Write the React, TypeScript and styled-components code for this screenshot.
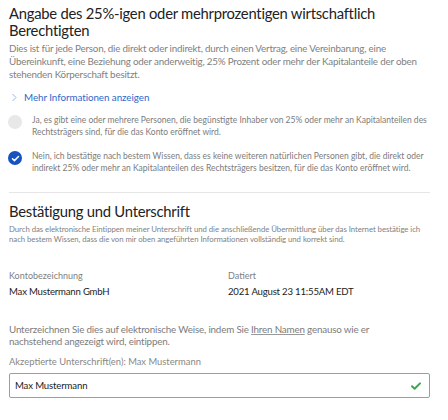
import React from 'react'
import styled, { createGlobalStyle } from 'styled-components'

const GlobalStyle = createGlobalStyle`
  body {
    margin: 0;
    background: #fff;
    font-family: Lato, "Open Sans", sans-serif;
    color: #222;
  }
`

const Page = styled.div`
  width: 448px;
  box-sizing: border-box;
  padding: 5px 18px 0 9px;
`

const Title = styled.h1`
  margin: 0;
  font-size: 14.8px;
  letter-spacing: -0.25px;
  line-height: 17px;
  font-weight: 400;
  color: #222;
`

const Lead = styled.p<{ small?: boolean }>`
  margin: ${p => (p.small ? '4.5px 0 0' : '2.5px 0 0')};
  font-size: ${p => (p.small ? '7.8px' : '9.8px')};
  letter-spacing: ${p => (p.small ? '-0.05px' : '-0.2px')};
  line-height: ${p => (p.small ? '10px' : '13px')};
  white-space: nowrap;
  color: #818181;
`

const MoreLink = styled.a`
  display: flex;
  align-items: center;
  gap: 6px;
  margin-top: 10px;
  height: 13px;
  font-size: 9.8px;
  letter-spacing: -0.05px;
  color: #2a6acb;
  text-decoration: none;
  cursor: pointer;

  svg {
    margin-left: 2px;
  }
`

const Options = styled.div`
  display: flex;
  flex-direction: column;
  gap: 11px;
  margin-top: 10px;
`

const Option = styled.label`
  display: flex;
  align-items: flex-start;
  gap: 10px;
`

const Radio = styled.span<{ checked?: boolean }>`
  flex: none;
  width: 14px;
  height: 14px;
  margin: 1.5px 0 0 -1px;
  border-radius: 50%;
  background: ${p => (p.checked ? '#1652c0' : '#e8e8e8')};
  display: flex;
  align-items: center;
  justify-content: center;
`

const OptionText = styled.span`
  font-size: 8.5px;
  line-height: 12.5px;
  color: #7c7c7c;
`

const Divider = styled.hr`
  border: 0;
  border-top: 1px solid #e6e6e6;
  margin: 17px 0 10px;
`

const Fields = styled.div`
  display: grid;
  grid-template-columns: 219px 1fr;
  margin-top: 25.5px;
`

const Field = styled.div`
  display: flex;
  flex-direction: column;
  gap: 5.5px;
`

const FieldLabel = styled.span`
  font-size: 9px;
  line-height: 11px;
  color: #808080;
`

const FieldValue = styled.span`
  font-size: 9.6px;
  letter-spacing: -0.2px;
  line-height: 12px;
  color: #222;
`

const SignNote = styled.p`
  margin: 26px 0 0;
  font-size: 9.8px;
  letter-spacing: -0.17px;
  line-height: 11.5px;
  color: #7c7c7c;

  u {
    text-decoration-color: #999;
  }
`

const Accepted = styled.div`
  margin-top: 9px;
  font-size: 9.4px;
  line-height: 11px;
  color: #888;
`

const InputBox = styled.div`
  margin-top: 6px;
  height: 25px;
  box-sizing: border-box;
  border: 1px solid #62c474;
  border-radius: 2px;
  display: flex;
  align-items: center;
  justify-content: space-between;
  padding: 0 7px 0 5px;
`

const InputText = styled.span`
  font-size: 9.6px;
  letter-spacing: -0.15px;
  color: #222;
`

const Chevron = () => (
  <svg width="7" height="9" viewBox="0 0 7 9">
    <path d="M1.5 1l3.5 3.5L1.5 8" fill="none" stroke="#9ab6e4" strokeWidth="1" />
  </svg>
)

const Tick = ({ color, size }: { color: string; size: number }) => (
  <svg width={size} height={size} viewBox="0 0 12 12">
    <path d="M2 6.3l2.6 2.5L10 3.4" fill="none" stroke={color} strokeWidth="2" strokeLinecap="round" strokeLinejoin="round" />
  </svg>
)

export default function App() {
  return (
    <>
      <GlobalStyle />
      <Page>
        <Title>Angabe des 25%-igen oder mehrprozentigen wirtschaftlich Berechtigten</Title>
        <Lead>
          Dies ist für jede Person, die direkt oder indirekt, durch einen Vertrag, eine Vereinbarung, eine
          <br />
          Übereinkunft, eine Beziehung oder anderweitig, 25% Prozent oder mehr der Kapitalanteile der oben
          <br />
          stehenden Körperschaft besitzt.
        </Lead>
        <MoreLink>
          <Chevron />
          Mehr Informationen anzeigen
        </MoreLink>
        <Options>
          <Option>
            <Radio />
            <OptionText>
              Ja, es gibt eine oder mehrere Personen, die begünstigte Inhaber von 25% oder mehr an Kapitalanteilen des
              Rechtsträgers sind, für die das Konto eröffnet wird.
            </OptionText>
          </Option>
          <Option>
            <Radio checked>
              <Tick color="#fff" size={9} />
            </Radio>
            <OptionText>
              Nein, ich bestätige nach bestem Wissen, dass es keine weiteren natürlichen Personen gibt, die direkt oder
              indirekt 25% oder mehr an Kapitalanteilen des Rechtsträgers besitzen, für die das Konto eröffnet wird.
            </OptionText>
          </Option>
        </Options>
        <Divider />
        <Title>Bestätigung und Unterschrift</Title>
        <Lead small>
          Durch das elektronische Eintippen meiner Unterschrift und die anschließende Übermittlung über das Internet bestätige ich
          <br />
          nach bestem Wissen, dass die von mir oben angeführten Informationen vollständig und korrekt sind.
        </Lead>
        <Fields>
          <Field>
            <FieldLabel>Kontobezeichnung</FieldLabel>
            <FieldValue>Max Mustermann GmbH</FieldValue>
          </Field>
          <Field>
            <FieldLabel>Datiert</FieldLabel>
            <FieldValue>2021 August 23 11:55AM EDT</FieldValue>
          </Field>
        </Fields>
        <SignNote>
          Unterzeichnen Sie dies auf elektronische Weise, indem Sie <u>Ihren Namen</u> genauso wie er
          <br />
          nachstehend angezeigt wird, eintippen.
        </SignNote>
        <Accepted>Akzeptierte Unterschrift(en): Max Mustermann</Accepted>
        <InputBox>
          <InputText>Max Mustermann</InputText>
          <Tick color="#3aa84f" size={12} />
        </InputBox>
      </Page>
    </>
  )
}
